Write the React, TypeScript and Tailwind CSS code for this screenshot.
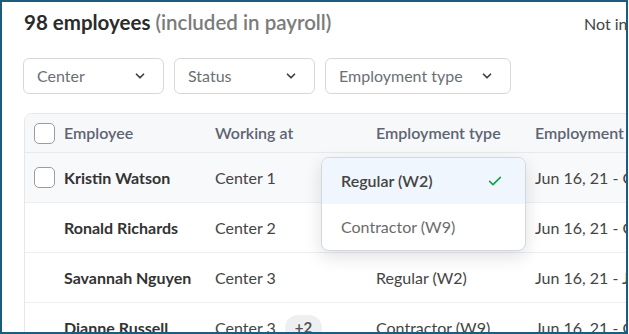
import React from 'react';

type Row = {
  name: string;
  center: string;
  extra?: string;
  type: string;
  period: string;
  checkbox?: boolean;
  highlight?: boolean;
};

const rows: Row[] = [
  { name: 'Kristin Watson', center: 'Center 1', type: '', period: 'Jun 16, 21 - Oct 12, 22', checkbox: true, highlight: true },
  { name: 'Ronald Richards', center: 'Center 2', type: '', period: 'Jun 16, 21 - Oct 12, 22' },
  { name: 'Savannah Nguyen', center: 'Center 3', type: 'Regular (W2)', period: 'Jun 16, 21 - Jul 01, 22' },
  { name: 'Dianne Russell', center: 'Center 3', extra: '+2', type: 'Contractor (W9)', period: 'Jun 16, 21 - Oct 12, 22' },
];

function Chevron() {
  return (
    <svg width="14" height="14" viewBox="0 0 24 24" fill="none" stroke="#3f3f46" strokeWidth="3" strokeLinecap="round" strokeLinejoin="round">
      <path d="M6 9l6 6 6-6" />
    </svg>
  );
}

function Filter({ label, width }: { label: string; width: string }) {
  return (
    <div className={`flex items-center justify-between h-[36px] ${width} pl-[13px] pr-[16px] border border-[#d6d8dc] rounded-[6px] text-[16px] text-[#6b6f76]`}>
      <span>{label}</span>
      <Chevron />
    </div>
  );
}

function Checkbox() {
  return <div className="w-[21px] h-[21px] rounded-[5px] border border-[#9a9ca1] bg-white" />;
}

export default function App() {
  return (
    <div className="w-[628px] h-[334px] overflow-hidden border-2 border-[#1c5c7d] bg-white font-['Lato','Noto_Sans',sans-serif]">
      <div className="flex items-start justify-between pl-[22px] pt-[7px]">
        <h2 className="text-[20.5px] font-bold text-[#2b2b2b] leading-[26px] whitespace-nowrap">
          98 employees <span className="font-semibold text-[#7b7b7b]">(included in payroll)</span>
        </h2>
        <span className="text-[16px] text-[#444] mt-[3px] whitespace-nowrap w-[42px] overflow-hidden">Not included</span>
      </div>

      <div className="flex gap-[10px] pl-[21px] mt-[22px]">
        <Filter label="Center" width="w-[141px]" />
        <Filter label="Status" width="w-[141px]" />
        <Filter label="Employment type" width="w-[186px]" />
      </div>

      <div className="relative ml-[22px] mt-[19px] w-[700px] border border-[#e5e7eb] rounded-t-[8px]">
        <div className="grid grid-cols-[39px_151px_161px_159px_189px] items-center h-[39px] bg-[#f7f8fa] border-b border-[#e7e9ec] rounded-t-[8px] text-[16px] font-semibold text-[#5d6473]">
          <div className="pl-[9px]"><Checkbox /></div>
          <div>Employee</div>
          <div>Working at</div>
          <div>Employment type</div>
          <div>Employment</div>
        </div>

        {rows.map((r) => (
          <div
            key={r.name}
            className={`grid grid-cols-[39px_151px_161px_159px_189px] items-center h-[50px] border-b border-[#eceef0] text-[16px] ${r.highlight ? 'bg-[#f8f9fb]' : 'bg-white'}`}
          >
            <div className="pl-[9px]">{r.checkbox && <Checkbox />}</div>
            <div className="font-bold text-[#333] whitespace-nowrap">{r.name}</div>
            <div className="flex items-center gap-[9px] text-[#444]">
              {r.center}
              {r.extra && (
                <span className="px-[10px] h-[26px] flex items-center rounded-full bg-[#eeeff1] text-[#555] text-[15px] font-bold">{r.extra}</span>
              )}
            </div>
            <div className="text-[#444]">{r.type}</div>
            <div className="text-[#444] whitespace-nowrap">{r.period}</div>
          </div>
        ))}

        <div className="absolute left-[296px] top-[43px] w-[205px] rounded-[8px] border border-[#d3d8df] bg-white shadow-[0_6px_18px_rgba(0,0,0,0.12)] overflow-hidden">
          <div className="flex items-center justify-between h-[46px] pl-[19px] pr-[22px] bg-[#eff6fd] text-[16px] font-semibold text-[#444]">
            <span>Regular (W2)</span>
            <svg width="16" height="16" viewBox="0 0 24 24" fill="none" stroke="#16a34a" strokeWidth="2.5" strokeLinecap="round" strokeLinejoin="round">
              <path d="M4 12.5l5 5L20 6.5" />
            </svg>
          </div>
          <div className="flex items-center h-[46px] pl-[19px] text-[16px] text-[#6b6b6b]">Contractor (W9)</div>
        </div>
      </div>
    </div>
  );
}
